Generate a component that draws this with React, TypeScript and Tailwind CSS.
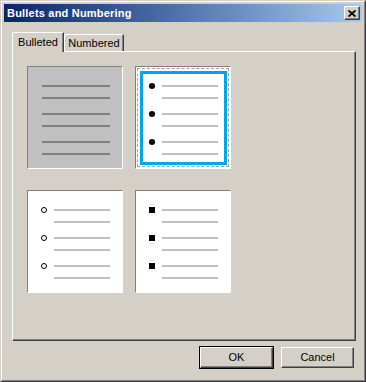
import React from 'react';

type Kind = 'none' | 'disc' | 'circle' | 'square';

const Marker: React.FC<{ kind: Kind }> = ({ kind }) => {
  if (kind === 'disc') return <div className="w-[6px] h-[6px] rounded-full bg-black shrink-0" />;
  if (kind === 'circle') return <div className="w-[6px] h-[6px] rounded-full border border-black bg-white shrink-0" />;
  return <div className="w-[6px] h-[6px] bg-black shrink-0" />;
};

const BulletBox: React.FC<{ kind: Kind; selected?: boolean }> = ({ kind, selected }) => {
  if (kind === 'none') {
    return (
      <div className="w-[96px] h-[103px] bg-[#c0c0c0] border border-[#808080] border-r-white border-b-white pl-[14px] pt-[18px] flex flex-col">
        {[0, 1, 2].map((g) => (
          <div key={g} className="flex flex-col gap-[10px] mb-[14px]">
            <div className="w-[68px] h-[2px] bg-[#808080]" />
            <div className="w-[68px] h-[2px] bg-[#808080]" />
          </div>
        ))}
      </div>
    );
  }
  return (
    <div className="relative w-[96px] h-[103px] bg-white border border-[#808080] border-r-white border-b-white pl-[13px] pt-[16px] flex flex-col">
      {selected && (
        <>
          <div className="absolute left-[1px] top-[1px] right-[1px] bottom-[1px] border border-dashed border-[#a0a0a0]" />
          <div className="absolute left-[4px] top-[4px] right-[3px] bottom-[3px] border-[3px] border-[#00a8e8]" />
        </>
      )}
      {[0, 1, 2].map((g) => (
        <div key={g} className="relative flex flex-col mb-[12px]">
          <div className="flex items-center h-[6px] gap-[7px]">
            <Marker kind={kind} />
            <div className="w-[56px] h-[2px] bg-[#c0c0c0]" />
          </div>
          <div className="ml-[13px] mt-[8px] w-[56px] h-[2px] bg-[#c0c0c0]" />
        </div>
      ))}
    </div>
  );
};

const Button: React.FC<{ label: string; isDefault?: boolean }> = ({ label, isDefault }) => (
  <div className={isDefault ? 'border border-black' : 'border border-transparent'}>
    <div className="w-[73px] h-[21px] bg-[#d4d0c8] border border-white border-r-[#404040] border-b-[#404040] shadow-[inset_-1px_-1px_0_#808080] flex items-center justify-center text-[11px] text-black">
      {label}
    </div>
  </div>
);

export default function App() {
  return (
    <div className="w-[366px] h-[382px] bg-[#d4d0c8] font-['Liberation_Sans',Arial,sans-serif] text-black">
      <div className="h-full border border-[#d4d0c8] border-r-[#404040] border-b-[#404040]">
        <div className="h-full border border-white border-r-[#808080] border-b-[#808080] p-[2px] flex flex-col">
          {/* title bar */}
          <div className="h-[18px] flex items-center justify-between pl-[3px] pr-[2px] bg-gradient-to-r from-[#0a246a] to-[#a6caf0]">
            <span className="text-[11px] font-bold text-white leading-none tracking-[0.2px]">Bullets and Numbering</span>
            <div className="w-[16px] h-[14px] bg-[#d4d0c8] border border-white border-r-[#404040] border-b-[#404040] shadow-[inset_-1px_-1px_0_#808080] flex items-center justify-center">
              <svg width="8" height="7" viewBox="0 0 8 7">
                <path d="M0.5 0.5 L7.5 6.5 M7.5 0.5 L0.5 6.5" stroke="black" strokeWidth="1.8" />
              </svg>
            </div>
          </div>

          {/* tabs */}
          <div className="mt-[10px] ml-[8px] h-[19px] flex items-end">
            <div className="relative z-10 -mb-px h-[20px] w-[52px] bg-[#d4d0c8] border-t border-l border-white border-r border-r-[#404040] shadow-[inset_-1px_0_0_#808080] rounded-tl-[2px] flex items-center justify-center text-[11px]">
              Bulleted
            </div>
            <div className="h-[17px] w-[60px] bg-[#d4d0c8] border-t border-l border-white border-r border-r-[#404040] shadow-[inset_-1px_0_0_#808080] rounded-tl-[2px] flex items-center justify-center text-[11px]">
              Numbered
            </div>
          </div>

          {/* panel */}
          <div className="ml-[8px] mr-[6px] h-[290px] border border-white border-r-[#404040] border-b-[#404040] shadow-[inset_-1px_-1px_0_#808080] pl-[14px] pt-[14px]">
            <div className="grid grid-cols-[96px_96px] gap-x-[12px] gap-y-[21px]">
              <BulletBox kind="none" />
              <BulletBox kind="disc" selected />
              <BulletBox kind="circle" />
              <BulletBox kind="square" />
            </div>
          </div>

          {/* buttons */}
          <div className="mt-[5px] mr-[7px] flex justify-end gap-[6px]">
            <Button label="OK" isDefault />
            <Button label="Cancel" />
          </div>
        </div>
      </div>
    </div>
  );
}
